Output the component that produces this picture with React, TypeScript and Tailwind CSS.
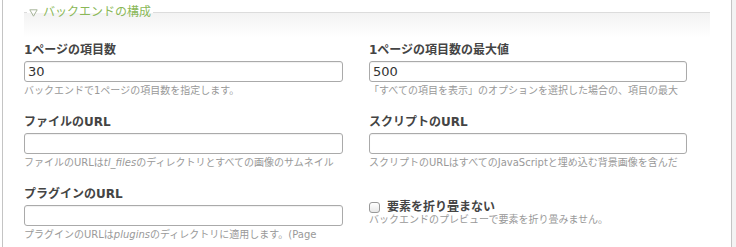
import type { ReactNode } from 'react';

const FONT = '"DejaVu Sans", "Noto Sans CJK JP", sans-serif';

function Field({
  label,
  value,
  help,
  width,
}: {
  label: string;
  value?: string;
  help: ReactNode;
  width: string;
}) {
  return (
    <div className="flex flex-col">
      <h3 className="h-[18px] whitespace-nowrap text-[12px] leading-[18px] font-bold text-[#444]">
        {label}
      </h3>
      <input
        type="text"
        defaultValue={value}
        className={`mt-[2px] h-[21px] ${width} rounded-[3px] border border-[#aaa] bg-white pl-[3px] text-[13px] text-[#333] shadow-[inset_0_1px_1px_rgba(0,0,0,0.06)] outline-none`}
        style={{ fontFamily: FONT }}
      />
      <p className="mt-[2px] h-[14px] whitespace-nowrap text-[10px] leading-[14px] text-[#999]">
        {help}
      </p>
    </div>
  );
}

export default function App() {
  return (
    <div
      className="flex h-[247px] w-[736px] overflow-hidden bg-white"
      style={{ fontFamily: FONT }}
    >
      <div className="w-[2px] shrink-0" />
      <div className="flex-1 border-x border-[#c4c4c4] px-[21px]">
        <fieldset className="border-t border-[#dcdcdc] bg-linear-to-b from-[#f3f3f3] to-white bg-[length:100%_24px] bg-no-repeat">
          <legend className="ml-[3px] flex h-[24px] items-center gap-[5px] px-[2px] text-[12px] leading-[24px] text-[#8ab858]">
            <svg width="9" height="8" viewBox="0 0 9 8" className="mt-[2px]">
              <path d="M0.8 0.8 H8.2 L4.5 7.2 Z" fill="none" stroke="#a7b59a" strokeWidth="1" />
            </svg>
            <span>バックエンドの構成</span>
          </legend>

          <div className="mt-[17px] grid grid-cols-[345px_1fr] gap-y-[15px]">
            <Field
              label="1ページの項目数"
              value="30"
              width="w-[319px]"
              help="バックエンドで1ページの項目数を指定します。"
            />
            <Field
              label="1ページの項目数の最大値"
              value="500"
              width="w-[318px]"
              help="「すべての項目を表示」のオプションを選択した場合の、項目の最大"
            />
            <Field
              label="ファイルのURL"
              width="w-[319px]"
              help={
                <>
                  ファイルのURLは<i>tl_files</i>のディレクトリとすべての画像のサムネイル
                </>
              }
            />
            <Field
              label="スクリプトのURL"
              width="w-[318px]"
              help="スクリプトのURLはすべてのJavaScriptと埋め込む背景画像を含んだ"
            />
            <Field
              label="プラグインのURL"
              width="w-[319px]"
              help={
                <>
                  プラグインのURLは<i>plugins</i>のディレクトリに適用します。(Page
                </>
              }
            />
            <div className="flex flex-col pt-[15px]">
              <label className="flex h-[14px] items-center gap-[7px]">
                <span className="h-[11px] w-[11px] rounded-[3px] border border-[#999] bg-linear-to-b from-white to-[#e8e8e8]" />
                <span className="whitespace-nowrap text-[12px] font-bold text-[#444]">
                  要素を折り畳まない
                </span>
              </label>
              <p className="h-[12px] whitespace-nowrap text-[10px] leading-[12px] text-[#999]">
                バックエンドのプレビューで要素を折り畳みません。
              </p>
            </div>
          </div>
        </fieldset>
      </div>
      <div className="w-[4px] shrink-0 bg-[#f3f3f3]" />
    </div>
  );
}
